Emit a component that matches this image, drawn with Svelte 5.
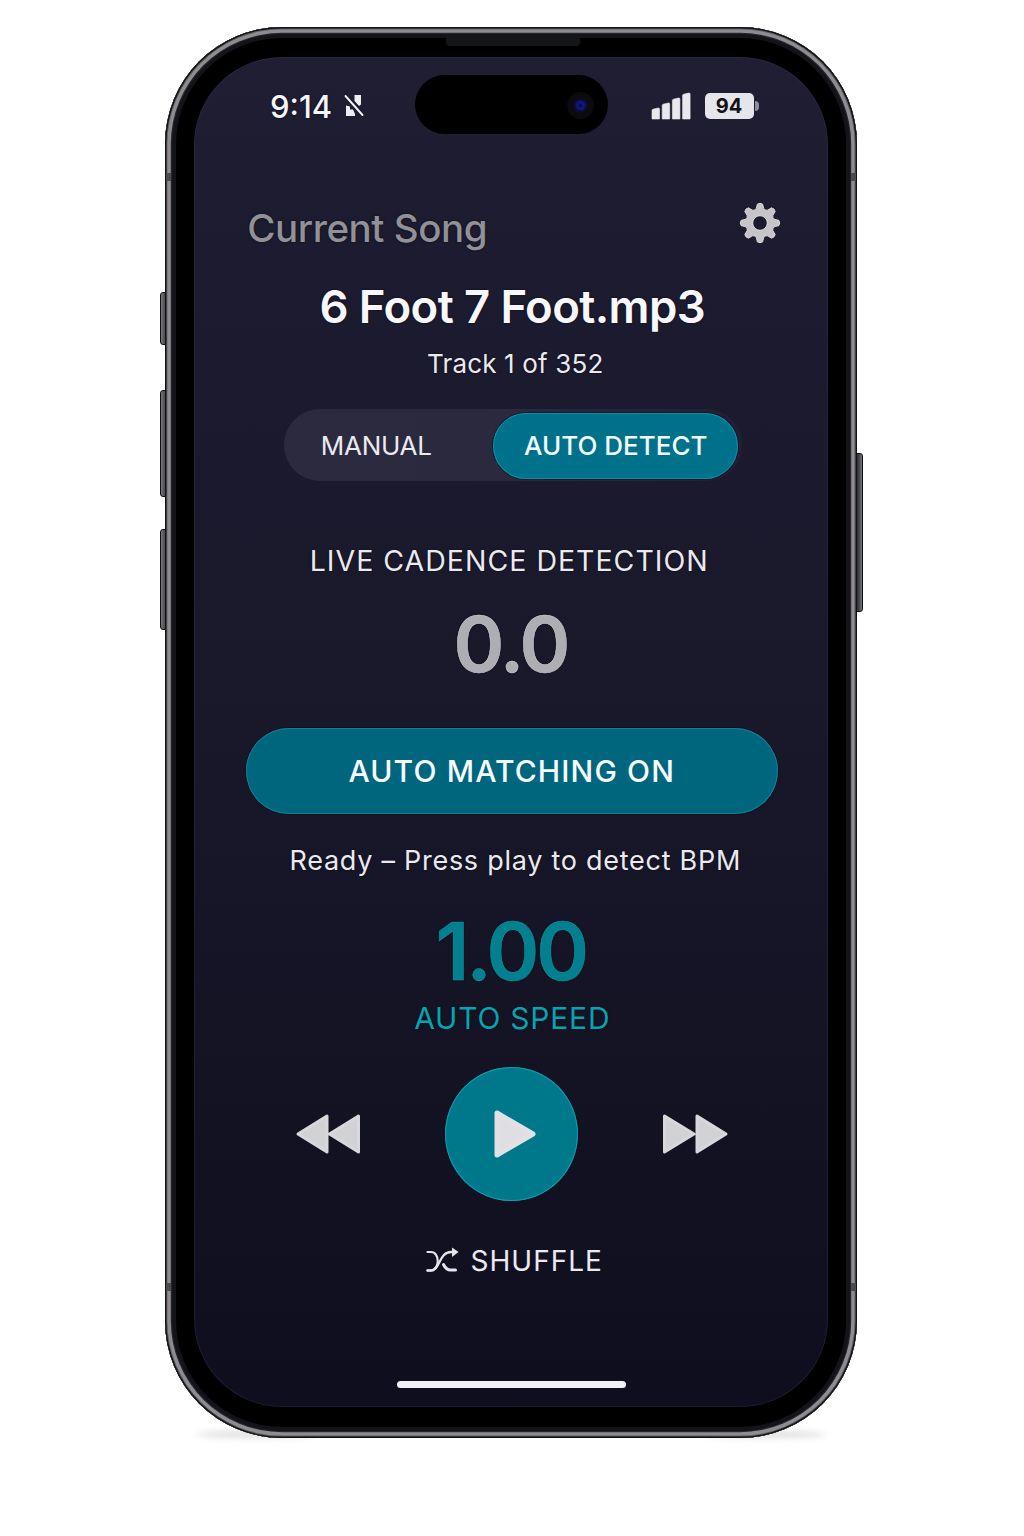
<script>
  const volumeKeys = ['action', 'up', 'down'];
  const bars = [11, 16, 21, 26];
  let mode = $state('auto');
  let playing = $state(false);

  // Eight-toothed gear outline, centred on the origin.
  const teeth = 8;
  const gear = Array.from({ length: teeth }, (_, i) => {
    const at = (deg, r) => {
      const a = ((i * 360) / teeth + deg - 90) * (Math.PI / 180);
      return `${(Math.cos(a) * r).toFixed(2)} ${(Math.sin(a) * r).toFixed(2)}`;
    };
    return `${i ? 'L' : 'M'}${at(-14, 15)} L${at(-8, 19)} Q${at(0, 20.6)} ${at(8, 19)} L${at(14, 15)} Q${at(22.5, 13.2)} ${at(31, 15)}`;
  }).join(' ') + 'Z';
</script>

<main class="stage">
  <div class="ground left"></div>
  <div class="ground right"></div>
  {#each volumeKeys as key}
    <span class="key {key}"></span>
  {/each}
  <span class="key power"></span>

  <div class="phone">
    <span class="band tl"></span><span class="band tr"></span>
    <span class="band bl"></span><span class="band br"></span>
    <span class="speaker"></span>

    <div class="screen">
      <div class="status">
        <div class="clock">
          <span class="time">9:14</span>
          <svg class="mute" width="22" height="24" viewBox="0 0 22 24">
            <path d="M11.500 1h6.500v9.500l-2 1.500-4.500-5zM3 11.500l4 1v3h3l2 4.500v2H3z" fill="#eeedf3" />
            <path d="M3.500 2l17 19.500" stroke="#1d1c2f" stroke-width="4.500" />
            <path d="M2.500 2l17 19" stroke="#f4f3f8" stroke-width="1.900" stroke-linecap="round" />
          </svg>
        </div>
        <div class="island"><span class="lens"></span></div>
        <div class="meters">
          <svg class="signal" width="40" height="28" viewBox="0 0 40 28">
            {#each bars as h, i}
              <path d="M{1 + i * 10.2} {27} v{-h + 2.500} q0 -1 1 -1.300 l5 -1.200 q1.500 -.2 1.500 1 V27z" fill="#e9e8ee" stroke="#e9e8ee" stroke-width=".6" stroke-linejoin="round" />
            {/each}
          </svg>
          <div class="battery"><span>94</span></div>
          <i class="cap"></i>
        </div>
      </div>

      <header class="top">
        <h2>Current Song</h2>
        <button class="gear" aria-label="Settings">
          <svg width="42" height="42" viewBox="-21 -21 42 42">
            <path d={gear} fill="#c6c4c8" stroke="#dad8dc" stroke-width="1" stroke-linejoin="round" />
            <circle r="7.300" fill="#1c1b2e" stroke="#e0dee2" stroke-width="1" />
          </svg>
        </button>
      </header>

      <h1>6 Foot 7 Foot.mp3</h1>
      <p class="track">Track 1 of 352</p>

      <div class="segment">
        <button class="manual" onclick={() => (mode = 'manual')}>MANUAL</button>
        <button class="auto" class:on={mode === 'auto'} onclick={() => (mode = 'auto')}>AUTO DETECT</button>
      </div>

      <p class="live">LIVE CADENCE DETECTION</p>
      <p class="cadence">0.0</p>
      <button class="matching">AUTO MATCHING ON</button>
      <p class="ready">Ready – Press play to detect BPM</p>
      <p class="speed">1.00</p>
      <p class="speed-label">AUTO SPEED</p>

      <div class="controls">
        <button aria-label="Previous">
          <svg width="66" height="42" viewBox="0 0 66 42">
            <path d="M32 3v36L3 21zM63.500 3v36L34.500 21z" class="tri" />
          </svg>
        </button>
        <button class="play" aria-label="Play" onclick={() => (playing = !playing)}>
          <svg width="44" height="50" viewBox="0 0 44 50">
            <path d="M4 4v42L40 25z" class="tri big" />
          </svg>
        </button>
        <button aria-label="Next">
          <svg width="66" height="42" viewBox="0 0 66 42">
            <path d="M1.500 3v36L31 21zM34 3v36L63 21z" class="tri" />
          </svg>
        </button>
      </div>

      <button class="shuffle">
        <svg width="34" height="28" viewBox="0 0 34 28" fill="none" stroke="#e6e5ec" stroke-width="2.300" stroke-linecap="round">
          <path d="M2.500 5h3.500c9 0 9 18 0 18.500H2.500" stroke-width="2.200" />
          <path d="M2.500 23.500H6C15 23.500 14 5 26 5h2" />
          <path d="M18.500 17.500c2 4 4 5.500 7 5.500h5" stroke-width="3" />
          <path d="M27 .5l6.500 4.500-6.500 5z" fill="#e6e5ec" stroke="none" />
        </svg>
        <span>SHUFFLE</span>
      </button>

      <div class="home"></div>
    </div>
  </div>
</main>

<style>
  :global(body) { background: #fff; }
  .stage {
    position: relative;
    width: 1024px;
    height: 1536px;
    box-sizing: border-box;
    padding: 27px 0 0 164.500px;
    overflow: hidden;
    background: #fff;
    font-family: Inter, 'Liberation Sans', sans-serif;
  }
  h1, h2, p { margin: 0; font-weight: 400; }
  button {
    padding: 0;
    border: 0;
    background: none;
    color: inherit;
    font: inherit;
    letter-spacing: inherit;
  }
  svg { display: block; }

  .phone {
    position: relative;
    width: 692.500px;
    height: 1411px;
    box-sizing: border-box;
    padding: 30px 29.500px;
    border-radius: 117px;
    background: #000;
    box-shadow:
      inset 0 0 0 1.400px #121214,
      inset 0 0 0 2.400px #5d5c61,
      inset 0 0 0 5.800px #8e8c91,
      inset 0 0 0 7px #26262a,
      inset 0 0 0 11px #121419;
  }
  .ground {
    position: absolute;
    top: 1431px;
    width: 120px;
    height: 7px;
    border-radius: 50%;
    background: rgba(0, 0, 0, 0.130);
    filter: blur(3px);
  }
  .ground.left { left: 196px; }
  .ground.right { left: 706px; }

  .key {
    position: absolute;
    left: 160px;
    width: 7px;
    box-sizing: border-box;
    border: 1.500px solid #0e0e12;
    border-radius: 3px 0 0 3px;
    background: linear-gradient(90deg, #77767c, #3e3e45);
  }
  .action { top: 292px; height: 53px; }
  .up { top: 390px; height: 107px; }
  .down { top: 529px; height: 101px; }
  .power {
    left: 855px;
    top: 453px;
    width: 8px;
    height: 159px;
    border-radius: 0 3px 3px 0;
    background: linear-gradient(90deg, #24262d, #4a4c54 60%, #77767c);
  }
  .band {
    position: absolute;
    width: 5.500px;
    height: 8px;
    background: #4b4a50;
  }
  .tl, .bl { left: 1px; }
  .tr, .br { right: 1px; }
  .tl, .tr { top: 146px; }
  .bl, .br { bottom: 147px; }
  .speaker {
    position: absolute;
    left: 281.500px;
    top: 9px;
    width: 134px;
    height: 10px;
    border-radius: 0 0 4px 4px;
    background: #151619;
  }

  .screen {
    display: flex;
    flex-direction: column;
    align-items: center;
    height: 1350px;
    border-radius: 88px;
    overflow: hidden;
    background: linear-gradient(#1f1e33 0, #1c1b2f 14%, #1a192c 45%, #141324 75%, #0f0e1e 100%);
    box-shadow: inset 0 0 0 1px rgba(70, 65, 110, 0.250);
    color: #ebeaf1;
    text-shadow: 0 0 2px rgba(0, 0, 0, 0.700);
    white-space: nowrap;
  }

  .status {
    position: relative;
    display: flex;
    justify-content: space-between;
    align-items: center;
    width: 100%;
    height: 100px;
    box-sizing: border-box;
    padding: 0 69px 2px 76px;
  }
  .clock { display: flex; align-items: center; gap: 11px; }
  .time { font-size: 31px; font-weight: 500; color: #f6f5fb; }
  .island {
    position: absolute;
    left: 221px;
    top: 18px;
    width: 193px;
    height: 59px;
    border-radius: 30px;
    background: #000;
  }
  .lens {
    position: absolute;
    right: 14px;
    top: 17px;
    width: 27px;
    height: 27px;
    border-radius: 50%;
    background: radial-gradient(circle, #0b0d3a 0 1.500px, #111688 2.500px 3.500px, #0a0c2c 6px, #0a0a0f 8px);
  }
  .meters { display: flex; align-items: center; }
  .signal { margin-right: 14px; }
  .battery {
    display: grid;
    place-items: center;
    width: 49px;
    height: 26px;
    border-radius: 5px;
    background: #e6e5eb;
    color: #111118;
    font-size: 20px;
    font-weight: 700;
    text-shadow: none;
  }
  .cap {
    width: 4px;
    height: 10px;
    margin-left: 1px;
    border-radius: 0 4px 4px 0;
    background: #8f8e97;
  }

  .top {
    display: flex;
    justify-content: space-between;
    align-items: center;
    width: 534px;
    height: 60px;
    margin: 41px 0 0 7px;
  }
  h2 {
    font-size: 38.500px;
    line-height: 60px;
    font-weight: 450;
    letter-spacing: -0.450px;
    color: #929198;
  }
  .gear { margin-top: -10px; }

  h1 {
    margin: 19px 0 0 3px;
    font-size: 45.500px;
    line-height: 60px;
    font-weight: 600;
    letter-spacing: -0.620px;
    color: #f8f8fc;
  }
  .track { margin: 12px 0 0 9px; font-size: 26px; line-height: 30px; letter-spacing: 0.150px; }

  .segment {
    display: flex;
    justify-content: space-between;
    align-items: center;
    width: 458px;
    height: 72px;
    box-sizing: border-box;
    margin: 30px 0 0 4px;
    padding: 0 3.500px 0 37px;
    border-radius: 36px;
    background: linear-gradient(90deg, #2c2a3e, #2a293d 50%, #211f35);
    font-size: 26px;
  }
  .manual { letter-spacing: -0.250px; }
  .auto {
    width: 245px;
    height: 66px;
    margin-top: 2px;
    padding-bottom: 2px;
    border-radius: 33px;
    font-weight: 500;
  }
  .auto.on {
    background: #00718b;
    box-shadow: inset 0 0 0 1px #0a91a5, 0 0 0 1px rgba(20, 5, 20, 0.500);
    color: #f3fbff;
  }

  .live { margin: 60px 3px 0 0; font-size: 28.500px; line-height: 40px; letter-spacing: 1px; }
  .cadence {
    margin-top: 23px;
    font-size: 77px;
    line-height: 80px;
    font-weight: 600;
    letter-spacing: -2.500px;
    color: #aeadb4;
    -webkit-text-stroke: 0.500px #cccbd2;
  }
  .matching {
    width: 532px;
    height: 86px;
    margin: 44px 0 0 2px;
    border-radius: 43px;
    background: #00667e;
    box-shadow: inset 0 0 0 1px #0d8298, 0 0 0 1px rgba(20, 5, 20, 0.500);
    font-size: 30px;
    font-weight: 500;
    letter-spacing: 1.120px;
    color: #f5fbff;
  }
  .ready { margin: 27px 0 0 9px; font-size: 27px; line-height: 40px; letter-spacing: 0.730px; }
  .speed {
    margin-top: 30px;
    font-size: 80px;
    line-height: 80px;
    font-weight: 600;
    letter-spacing: -3px;
    color: #02808f;
    -webkit-text-stroke: 0.500px #0a98a7;
  }
  .speed-label {
    margin: 7px 0 0 3px;
    font-size: 30px;
    line-height: 40px;
    letter-spacing: 0.780px;
    color: #06a3b1;
  }

  .controls {
    display: flex;
    justify-content: space-between;
    align-items: center;
    width: 434px;
    height: 134px;
    margin-top: 29px;
    margin-left: 2px;
  }
  .play {
    display: grid;
    place-items: center;
    width: 133px;
    height: 134px;
    padding-left: 6px;
    border-radius: 50%;
    background: #00788c;
    box-shadow: inset 0 0 0 1px #08a0b2, 0 0 0 1px rgba(20, 5, 20, 0.500);
  }
  .tri { fill: #d2d1d5; stroke: #d8d7db; stroke-width: 3; stroke-linejoin: round; }
  .big { fill: #dfdfe3; stroke: #e1e1e5; stroke-width: 5; }

  .shuffle {
    display: flex;
    align-items: center;
    gap: 12px;
    height: 40px;
    margin: 40px 0 0 6px;
    font-size: 28px;
    letter-spacing: 1px;
  }
  .home {
    width: 229px;
    height: 7px;
    margin: 100px 0 0 2px;
    border-radius: 4px;
    background: #f0f0f5;
  }
</style>
